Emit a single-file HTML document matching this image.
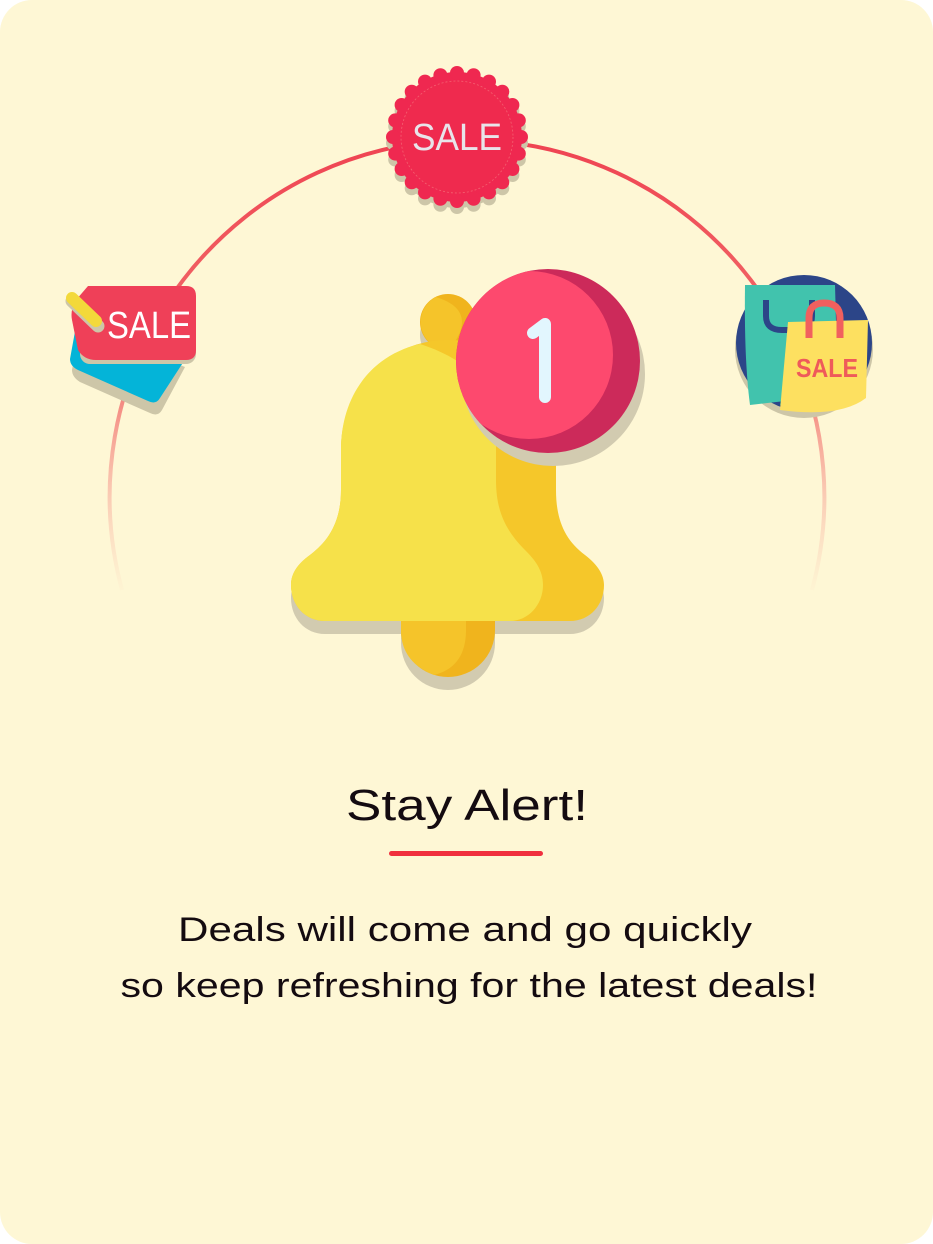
<!DOCTYPE html>
<html><head><meta charset="utf-8"><style>
html,body{margin:0;padding:0;background:#fff;}
.card{position:absolute;left:0;top:0;width:933px;height:1244px;background:#fef7d5;border-radius:32px;overflow:hidden;}
svg{position:absolute;left:0;top:0}
</style></head><body>
<div class="card">
<svg width="933" height="1244" viewBox="0 0 933 1244" xmlns="http://www.w3.org/2000/svg">
<defs>
<linearGradient id="arcg" gradientUnits="userSpaceOnUse" x1="0" y1="140" x2="0" y2="600">
<stop offset="0" stop-color="#ef4352"/>
<stop offset="0.5" stop-color="#f06060" stop-opacity="0.9"/>
<stop offset="1" stop-color="#f8b0a0" stop-opacity="0"/>
</linearGradient>
<clipPath id="bc"><circle cx="548" cy="361" r="92"/></clipPath>
<g id="scal">
<circle r="65"/>
<circle cx="0" cy="-64" r="7"/><circle cx="16.6" cy="-61.8" r="7"/><circle cx="32" cy="-55.4" r="7"/><circle cx="45.3" cy="-45.3" r="7"/><circle cx="55.4" cy="-32" r="7"/><circle cx="61.8" cy="-16.6" r="7"/>
<circle cx="64" cy="0" r="7"/><circle cx="61.8" cy="16.6" r="7"/><circle cx="55.4" cy="32" r="7"/><circle cx="45.3" cy="45.3" r="7"/><circle cx="32" cy="55.4" r="7"/><circle cx="16.6" cy="61.8" r="7"/>
<circle cx="0" cy="64" r="7"/><circle cx="-16.6" cy="61.8" r="7"/><circle cx="-32" cy="55.4" r="7"/><circle cx="-45.3" cy="45.3" r="7"/><circle cx="-55.4" cy="32" r="7"/><circle cx="-61.8" cy="16.6" r="7"/>
<circle cx="-64" cy="0" r="7"/><circle cx="-61.8" cy="-16.6" r="7"/><circle cx="-55.4" cy="-32" r="7"/><circle cx="-45.3" cy="-45.3" r="7"/><circle cx="-32" cy="-55.4" r="7"/><circle cx="-16.6" cy="-61.8" r="7"/>
</g>
</defs>
<!-- arc -->
<path d="M 122 590 A 357 357 0 0 1 467 140 A 357 357 0 0 1 812 590" fill="none" stroke="url(#arcg)" stroke-width="4"/>

<!-- top SALE badge -->
<g transform="translate(457,143)" fill="#cdc6a8"><use href="#scal"/></g>
<g transform="translate(457,137)" fill="#ef2850"><use href="#scal"/></g>
<circle cx="457" cy="137" r="56" fill="#ef2a4e" stroke="#f46070" stroke-width="0.8" stroke-dasharray="2 2"/>
<text x="457" y="150" text-anchor="middle" font-family="Liberation Sans, sans-serif" font-size="38" fill="#e8e4ea" textLength="90" lengthAdjust="spacingAndGlyphs">SALE</text>

<!-- left SALE tag -->
<path d="M80 325 L185 367 L162 410 Q158 417 150 413 L80 382 Q72 377 72 370 Z" fill="#cdc6a8"/>
<path d="M78 315 L186 358 L160 398 Q156 405 148 401 L78 370 Q70 366 70 359 Z" fill="#04b4d8"/>
<rect x="80" y="292" width="116" height="72" rx="10" fill="#cdc6a8"/>
<path d="M88 286 L186 286 Q196 286 196 296 L196 350 Q196 360 186 360 L96 360 Q84 360 78 350 L72 320 Q70 310 76 300 Z" fill="#ef4058"/>
<line x1="72" y1="301" x2="98" y2="326" stroke="#cdc6a8" stroke-width="13" stroke-linecap="round"/>
<line x1="72" y1="298" x2="96" y2="321" stroke="#f3d93a" stroke-width="12" stroke-linecap="round"/>
<text x="107" y="338" font-family="Liberation Sans, sans-serif" font-size="38" fill="#fff" textLength="84" lengthAdjust="spacingAndGlyphs">SALE</text>

<!-- right bag circle -->
<circle cx="804" cy="349" r="69" fill="#cdc6a8"/>
<circle cx="804" cy="343" r="68" fill="#2c4588"/>
<path d="M745 285 L835 285 L838 395 L750 405 Q744 360 745 285 Z" fill="#41c3ad"/>
<path d="M790 345 L830 340 L830 400 L780 405 Z" fill="#16b0a0"/>
<path d="M766 300 L766 316 Q766 330 782 330 L796 330 Q812 330 812 316 L812 300" fill="none" stroke="#2c4588" stroke-width="6"/>
<path d="M788 322 L868 320 L866 398 Q840 418 780 410 Z" fill="#fde060"/>
<path d="M809 338 L809 318 Q809 303 824 303 Q840 303 840 318 L840 338" fill="none" stroke="#f1605e" stroke-width="7"/>
<text x="827" y="377" text-anchor="middle" font-family="Liberation Sans, sans-serif" font-weight="bold" font-size="26" fill="#ef5a5a" textLength="62" lengthAdjust="spacingAndGlyphs">SALE</text>

<!-- bell shadow -->
<g fill="#d2cbb0" transform="translate(0,13)">
<circle cx="448" cy="322" r="28"/>
<circle cx="448" cy="630" r="47"/>
<rect x="401" y="600" width="94" height="30"/>
<path d="M448 340 C390 340 341 385 341 450 L341 490 C341 520 330 540 310 555 C296 565 291 575 291 585 C291 605 305 621 325 621 L570 621 C590 621 604 605 604 585 C604 575 598 565 585 555 C565 540 556 520 556 490 L556 450 C556 385 506 340 448 340 Z"/>
</g>
<!-- bell -->
<circle cx="448" cy="322" r="28" fill="#f0b41d"/>
<path d="M436 297 A28 28 0 0 0 448 350 Q462 335 462 322 Q462 305 436 297 Z" fill="#f5c42a"/>
<circle cx="448" cy="630" r="47" fill="#f0b41d"/>
<rect x="401" y="600" width="94" height="30" fill="#f0b41d"/>
<path d="M401 600 L466 600 L466 630 Q466 667 434 675 Q401 662 401 630 Z" fill="#f5c42a"/>
<path d="M448 340 C390 340 341 385 341 450 L341 490 C341 520 330 540 310 555 C296 565 291 575 291 585 C291 605 305 621 325 621 L570 621 C590 621 604 605 604 585 C604 575 598 565 585 555 C565 540 556 520 556 490 L556 450 C556 385 506 340 448 340 Z" fill="#f5c72a"/>
<path d="M420 344 C372 355 341 395 341 450 L341 490 C341 520 330 540 310 555 C296 565 291 575 291 585 C291 605 305 621 325 621 L510 621 C528 621 543 605 543 585 C543 570 535 560 525 550 C505 530 496 510 496 480 L496 420 C496 390 470 360 420 344 Z" fill="#f6e14a"/>

<!-- badge -->
<circle cx="553" cy="374" r="92" fill="#d2cbb0"/>
<circle cx="548" cy="361" r="92" fill="#cc2a5a"/>
<circle cx="529" cy="355" r="84" fill="#fd496e" clip-path="url(#bc)"/>
<path d="M533 333 L545 324 L545 397" fill="none" stroke="#e2f6fe" stroke-width="12" stroke-linecap="round" stroke-linejoin="round"/>

<!-- text -->
<text x="467" y="820" text-anchor="middle" font-family="Liberation Sans, sans-serif" font-size="44" fill="#140b10" textLength="242" lengthAdjust="spacingAndGlyphs">Stay Alert!</text>
<rect x="389" y="851" width="154" height="5" rx="2.5" fill="#f0303e"/>
<text x="465" y="941" text-anchor="middle" font-family="Liberation Sans, sans-serif" font-size="34" fill="#140b10" textLength="574" lengthAdjust="spacingAndGlyphs">Deals will come and go quickly</text>
<text x="469" y="997" text-anchor="middle" font-family="Liberation Sans, sans-serif" font-size="34" fill="#140b10" textLength="697" lengthAdjust="spacingAndGlyphs">so keep refreshing for the latest deals!</text>
</svg>
</div>
</body></html>
